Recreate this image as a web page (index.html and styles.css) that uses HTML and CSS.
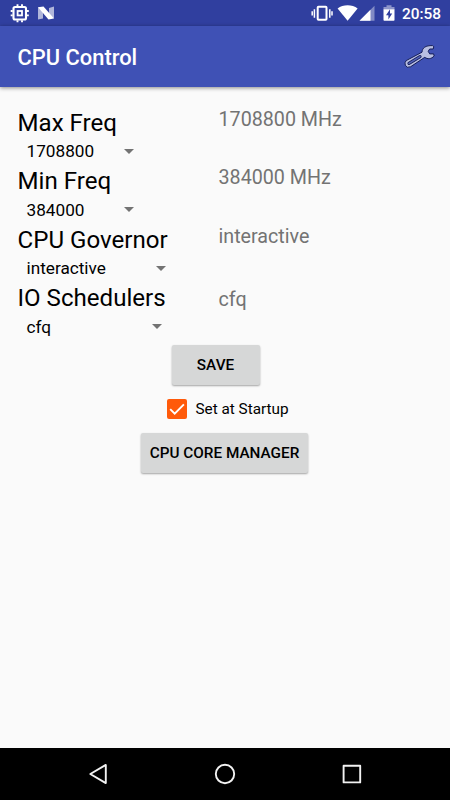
FILE: index.html
```
<!DOCTYPE html>
<html lang="en">
<head>
  <meta charset="UTF-8">
  <meta name="viewport" content="width=device-width, initial-scale=1.0">
  <title>CPU Control</title>
  <link rel="stylesheet" href="styles.css">
</head>
<body>

  <div class="status-bar">
    <svg class="status-left" width="60" height="26" viewBox="0 0 60 26">
      <!-- cpu -->
      <rect x="13.5" y="7" width="12.5" height="12.5" rx="1.5" fill="none" stroke="#fff" stroke-width="2.1"/>
      <rect x="17.6" y="11" width="4.4" height="4.4" fill="none" stroke="#fff" stroke-width="1.8"/>
      <path d="M17.5 4.2v2M22 4.2v2M17.5 20.3v2M22 20.3v2M10.7 11h2M10.7 15.4h2M26.8 11h2M26.8 15.4h2" stroke="#fff" stroke-width="1.9"/>
      <!-- android n -->
      <path d="M38 7l5 3.5v8l-5 1zM54 6.5v12l-5-3.5V8z" fill="#fff" opacity="0.62"/>
      <path d="M38 7.3l5.5-.8L54 18.5l-5.500 1z" fill="#fff"/>
    </svg>
    <svg class="status-right" width="90" height="26" viewBox="0 0 90 26">
      <!-- vibrate -->
      <rect x="7.7" y="6.8" width="8.8" height="13" rx="0.8" fill="none" stroke="#fff" stroke-width="2"/>
      <path d="M4.4 9.2v8.6M2.2 11.3v4.3M19.8 9.2v8.6M22 11.3v4.3" stroke="#fff" stroke-width="1.5"/>
      <!-- wifi -->
      <path d="M27.6 8.5C33 4.2 42.2 4.2 47.6 8.5L37.6 20.7z" fill="#fff"/>
      <!-- signal -->
      <path d="M64.5 5.7v15H49.5z" fill="#fff" opacity="0.4"/>
      <path d="M60.5 9.7v11h-11z" fill="#fff"/>
      <!-- battery -->
      <path d="M76.5 5.3h5v1.7h3v2.5h-11V7h3z" fill="#fff" opacity="0.45"/>
      <path d="M73.5 9.3h11v10.7q0 .8-.8.8h-9.4q-.8 0-.8-.8z" fill="#fff"/>
      <path d="M80 9.3l-4 5.9h2.4v4.3l3.8-5.9H80z" fill="#303f9f"/>
    </svg>
    <span class="clock">20:58</span>
  </div>

  <div class="toolbar">
    <h1 class="title">CPU Control</h1>
    <svg class="wrench" width="34" height="28" viewBox="0 0 34 28">
      <path d="M3.2 17.6L19 9.2C19.2 5 22.5 2.300 29.500 2.600L30.800 3.700L30.200 6L26.700 6L25.200 8.300L26.700 10.900L30.600 10.900L31.200 13C28.200 16.200 24.500 16.400 21.800 14.300L7.500 23.800Q4 25.500 2.300 22.300Q1.300 19.500 3.200 17.600z" fill="#b9bfe2" stroke="#161e58" stroke-width="1" stroke-linejoin="round"/>
      <path d="M6 20.4L17 13.6" stroke="#161e58" stroke-width="3.2" stroke-linecap="round"/>
      <path d="M6 20.4L17 13.6" stroke="#5564b9" stroke-width="1.6" stroke-linecap="round"/>
    </svg>
  </div>

  <div class="content">
    <div class="row">
      <div class="setting">
        <div class="label">Max Freq</div>
        <div class="spinner"><span>1708800</span><i class="arrow"></i></div>
      </div>
      <div class="value">1708800 MHz</div>
    </div>
    <div class="row">
      <div class="setting">
        <div class="label">Min Freq</div>
        <div class="spinner"><span>384000</span><i class="arrow"></i></div>
      </div>
      <div class="value">384000 MHz</div>
    </div>
    <div class="row">
      <div class="setting">
        <div class="label">CPU Governor</div>
        <div class="spinner governor"><span>interactive</span><i class="arrow"></i></div>
      </div>
      <div class="value">interactive</div>
    </div>
    <div class="row">
      <div class="setting">
        <div class="label">IO Schedulers</div>
        <div class="spinner scheduler"><span>cfq</span><i class="arrow"></i></div>
      </div>
      <div class="value value-last">cfq</div>
    </div>

    <div class="actions">
      <button class="btn btn-save">SAVE</button>
      <div class="startup">
        <svg width="20" height="20" viewBox="0 0 20 20">
          <rect width="20" height="20" rx="2" fill="#ff5a0a"/>
          <path d="M3.2 10.1l4.5 4.5 9.2-9.3" fill="none" stroke="#fff" stroke-width="1.9"/>
        </svg>
        <span>Set at Startup</span>
      </div>
      <button class="btn btn-core">CPU CORE MANAGER</button>
    </div>
  </div>

  <div class="nav-bar">
    <svg width="22" height="22" viewBox="0 0 22 22"><path d="M18.8 1.9v18.2L3.3 11z"/></svg>
    <svg width="22" height="22" viewBox="0 0 22 22"><circle cx="11" cy="11" r="9.2"/></svg>
    <svg width="22" height="22" viewBox="0 0 22 22"><rect x="2.6" y="2.8" width="16.6" height="16.6"/></svg>
  </div>

</body>
</html>
```
FILE: styles.css
```
* {
  margin: 0;
  padding: 0;
  box-sizing: border-box;
}

body {
  font-family: Roboto, sans-serif;
  background-color: #fafafa;
  color: #000;
  display: flex;
  flex-direction: column;
  height: 100vh;
  overflow: hidden;
}

.status-bar {
  display: flex;
  align-items: center;
  height: 26px;
  background-color: #303f9f;
  flex-shrink: 0;
}

.status-right {
  margin-left: auto;
}

.clock {
  width: 50px;
  padding: 1px 0 0 2px;
  color: #fff;
  font-size: 15.4px;
  font-weight: 500;
  line-height: 24px;
}

.toolbar {
  display: flex;
  align-items: center;
  justify-content: space-between;
  height: 61px;
  padding: 0 13px 0 17.5px;
  background-color: #3f51b5;
  box-shadow: 0 1px 4px rgba(0, 0, 0, 0.45);
  flex-shrink: 0;
}

.title {
  color: #fff;
  font-size: 21.9px;
  font-weight: 500;
  line-height: 30px;
  padding-top: 3px;
}

.content {
  flex: 1;
  padding: 20.5px 17.5px 0;
}

.row {
  display: grid;
  grid-template-columns: 201px 1fr;
  height: 58.5px;
}

.label {
  font-size: 24.1px;
  line-height: 31px;
}

.spinner {
  display: flex;
  align-items: center;
  justify-content: space-between;
  width: 116px;
  height: 25px;
  padding-left: 9px;
  font-size: 17.2px;
}

.governor {
  width: 148.5px;
}

.scheduler {
  width: 144.5px;
}

.arrow {
  border: 5.5px solid transparent;
  border-top-color: #737373;
  border-bottom: 0;
}

.value {
  color: #737373;
  font-size: 19.7px;
  line-height: 24px;
}

.value-last {
  padding-top: 5px;
}

.actions {
  display: flex;
  flex-direction: column;
  align-items: center;
  padding-top: 3px;
}

.btn {
  height: 40px;
  border: none;
  border-radius: 2px;
  background-color: #d6d7d7;
  box-shadow: 0 1px 2px rgba(0, 0, 0, 0.35);
  color: #000;
  font-family: inherit;
  font-size: 15.3px;
  font-weight: 500;
  padding-top: 1px;
}

.btn-save {
  width: 88px;
  margin-right: 19px;
}

.btn-core {
  width: 167px;
  margin-right: 1px;
}

.startup {
  display: flex;
  align-items: center;
  gap: 8px;
  height: 48px;
  margin-left: 6px;
  font-size: 15.3px;
}

.nav-bar {
  display: flex;
  align-items: center;
  justify-content: center;
  gap: 105px;
  height: 52px;
  background-color: #000;
  flex-shrink: 0;
}

.nav-bar svg {
  fill: none;
  stroke: #f2f2f2;
  stroke-width: 1.9;
  stroke-linejoin: round;
}
```
